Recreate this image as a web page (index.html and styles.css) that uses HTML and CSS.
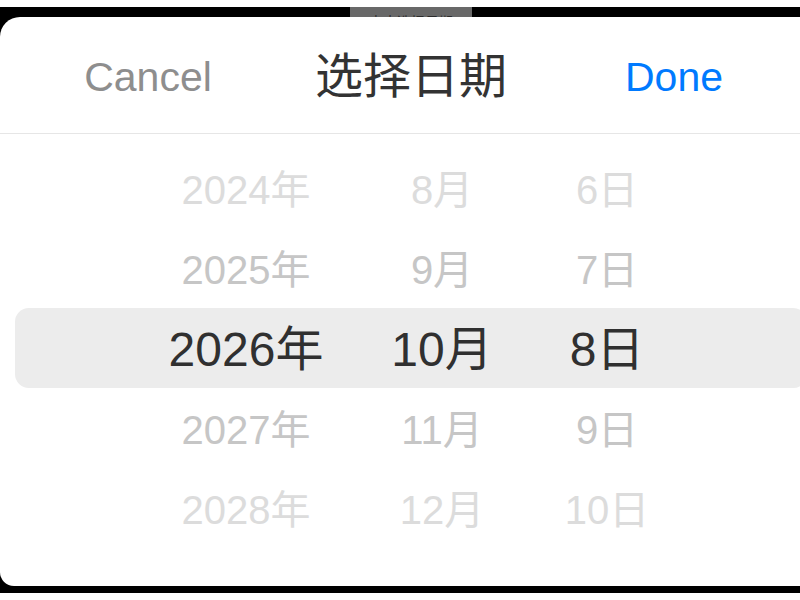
FILE: index.html
```html
<!DOCTYPE html>
<html lang="zh-CN">
<head>
<meta charset="utf-8">
<title>选择日期</title>
<link rel="stylesheet" href="styles.css">
</head>
<body>
  <div class="screen">
    <div class="under">
      <span class="under-btn">点击选择日期</span>
    </div>
    <section class="sheet">
      <header class="sheet-head">
        <button class="head-btn cancel">Cancel</button>
        <h1 class="head-title">选择日期</h1>
        <button class="head-btn done">Done</button>
      </header>
      <div class="picker">
        <div class="row far"><span>2024年</span><span>8月</span><span>6日</span></div>
        <div class="row near"><span>2025年</span><span>9月</span><span>7日</span></div>
        <div class="row current"><span>2026年</span><span>10月</span><span>8日</span></div>
        <div class="row near"><span>2027年</span><span>11月</span><span>9日</span></div>
        <div class="row far"><span>2028年</span><span>12月</span><span>10日</span></div>
      </div>
    </section>
  </div>
</body>
</html>
```

FILE: styles.css
```css
html, body {
  margin: 0;
  padding: 0;
  width: 800px;
  height: 600px;
  overflow: hidden;
  background: #fff;
  font-family: "Liberation Sans", "Noto Sans CJK SC", sans-serif;
}

.screen {
  margin-top: 7px;
  height: 586px;
  background: #000;
  overflow: hidden;
}

/* page content dimmed under the sheet */
.under {
  height: 10px;
  display: flex;
  overflow: hidden;
}

.under-btn {
  margin-left: 350px;
  width: 122px;
  height: 10px;
  background: #686868;
  color: #2b2b2b;
  font-size: 14px;
  line-height: 14px;
  padding-top: 8px;
  box-sizing: border-box;
  text-align: center;
  overflow: hidden;
  white-space: nowrap;
}

.sheet {
  width: 822px;
  height: 569px;
  background: #fff;
  border-radius: 20px 20px 14px 14px;
  overflow: hidden;
}

.sheet-head {
  height: 117px;
  box-sizing: border-box;
  padding: 4px 58px 0;
  border-bottom: 1px solid #e6e6e6;
  display: flex;
  align-items: center;
}

.head-btn {
  width: 180px;
  border: 0;
  background: none;
  padding: 0;
  font-family: inherit;
  font-size: 41px;
  line-height: 1;
  text-align: center;
}

.cancel { color: #8e8e8e; }
.done { color: #007aff; }

.head-title {
  flex: 1;
  margin: 0;
  text-align: center;
  font-size: 48px;
  font-weight: 400;
  color: #333;
  line-height: 1;
}

.picker {
  padding-top: 14px;
}

.row {
  height: 80px;
  margin: 0 15px;
  display: grid;
  grid-template-columns: 220px 172px 158px;
  justify-content: center;
  align-items: center;
  text-align: center;
  font-size: 40px;
}

.row span {
  line-height: 1;
  padding-top: 4px;
}

.far { color: #dcdcdc; }
.near { color: #c6c6c6; }

.current {
  background: #ececec;
  border-radius: 14px;
  color: #303030;
  font-size: 48px;
}
```
